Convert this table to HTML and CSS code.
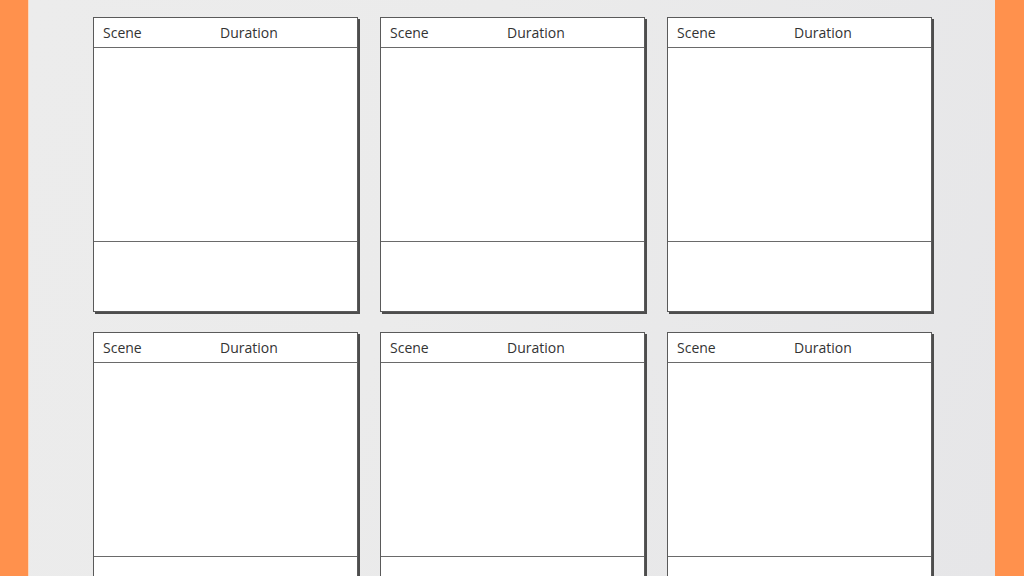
FILE: index.html
```html
<!DOCTYPE html>
<html>
<head>
<meta charset="utf-8">
<link rel="stylesheet" href="styles.css">
</head>
<body>
<div class="frame">
  <div class="edge edge-left"></div>
  <main class="sheet">
    <div class="grid">
      <div class="card"><div class="head"><span class="scene">Scene</span><span class="dur">Duration</span></div><div class="frame-box"></div><div class="notes"></div></div>
      <div class="card"><div class="head"><span class="scene">Scene</span><span class="dur">Duration</span></div><div class="frame-box"></div><div class="notes"></div></div>
      <div class="card"><div class="head"><span class="scene">Scene</span><span class="dur">Duration</span></div><div class="frame-box"></div><div class="notes"></div></div>
      <div class="card"><div class="head"><span class="scene">Scene</span><span class="dur">Duration</span></div><div class="frame-box"></div><div class="notes"></div></div>
      <div class="card"><div class="head"><span class="scene">Scene</span><span class="dur">Duration</span></div><div class="frame-box"></div><div class="notes"></div></div>
      <div class="card"><div class="head"><span class="scene">Scene</span><span class="dur">Duration</span></div><div class="frame-box"></div><div class="notes"></div></div>
    </div>
  </main>
  <div class="edge edge-right"></div>
</div>
</body>
</html>
```
FILE: styles.css
```css
html, body {
  margin: 0;
  padding: 0;
  width: 1024px;
  height: 576px;
  overflow: hidden;
}
.frame {
  display: flex;
  width: 1024px;
  height: 576px;
}
.edge {
  background: #ff914d;
  flex: none;
}
.edge-left {
  width: 28px;
  border-right: 1px solid #fbd9c0;
}
.edge-right {
  width: 29px;
}
.sheet {
  flex: 1;
  background: linear-gradient(110deg, #ececec 0%, #ebebeb 40%, #e6e6e8 100%);
  padding: 17px 0 0 64px;
  overflow: hidden;
}
.grid {
  display: grid;
  grid-template-columns: repeat(3, 265px);
  grid-auto-rows: 295px;
  column-gap: 22px;
  row-gap: 20px;
}
.card {
  background: #fff;
  border: 1px solid #5a5a5a;
  box-shadow: 2px 2px 0 #4d4d4d;
  display: flex;
  flex-direction: column;
  box-sizing: border-box;
}
.head {
  height: 30px;
  border-bottom: 1px solid #6a6a6a;
  display: flex;
  align-items: center;
  font-family: "Open Sans", sans-serif;
  font-size: 14px;
  color: #333;
  padding-left: 9px;
  padding-bottom: 1px;
  box-sizing: border-box;
}
.scene {
  width: 117px;
}
.frame-box {
  height: 194px;
  border-bottom: 1px solid #6a6a6a;
  box-sizing: border-box;
}
.notes {
  flex: 1;
}
```
